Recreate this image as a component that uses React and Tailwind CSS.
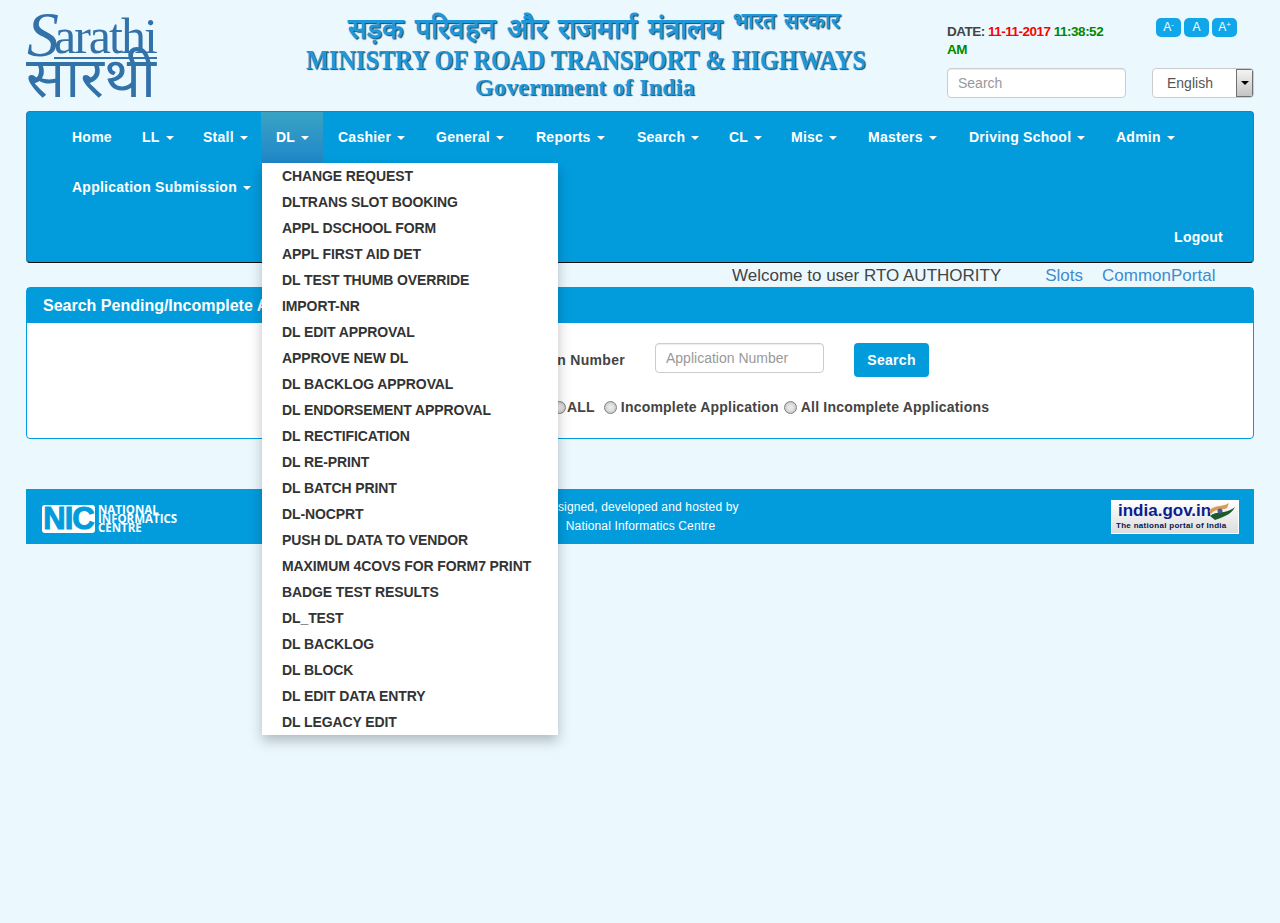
import { useState } from 'react';

const navItems = [
  { label: 'LL', width: 'w-[61px]' },
  { label: 'Stall', width: 'w-[73px]' },
  { label: 'DL', width: 'w-[62px]' },
  { label: 'Cashier', width: 'w-[98px]' },
  { label: 'General', width: 'w-[100px]' },
  { label: 'Reports', width: 'w-[101px]' },
  { label: 'Search', width: 'w-[92px]' },
  { label: 'CL', width: 'w-[62px]' },
  { label: 'Misc', width: 'w-[77px]' },
  { label: 'Masters', width: 'w-[101px]' },
  { label: 'Driving School', width: 'w-[147px]' },
  { label: 'Admin', width: 'w-[72px]' },
  { label: 'Application Submission', width: 'w-[208px]' },
];

const dlMenu = [
  'CHANGE REQUEST', 'DLTRANS SLOT BOOKING', 'APPL DSCHOOL FORM', 'APPL FIRST AID DET', 'DL TEST THUMB OVERRIDE',
  'IMPORT-NR', 'DL EDIT APPROVAL', 'APPROVE NEW DL', 'DL BACKLOG APPROVAL', 'DL ENDORSEMENT APPROVAL',
  'DL RECTIFICATION', 'DL RE-PRINT', 'DL BATCH PRINT', 'DL-NOCPRT', 'PUSH DL DATA TO VENDOR',
  'MAXIMUM 4COVS FOR FORM7 PRINT', 'BADGE TEST RESULTS', 'DL_TEST', 'DL BACKLOG', 'DL BLOCK', 'DL EDIT DATA ENTRY', 'DL LEGACY EDIT',
];

function Caret() {
  return <span className="inline-block w-0 h-0 ml-[2px] align-middle border-t-4 border-x-4 border-x-transparent border-t-white"></span>;
}

function SarathiLogo() {
  return (
    <svg className="mt-[10px] overflow-visible" width="131" height="90" viewBox="0 0 131 90" fill="#3272a8">
      <text x="1" y="46" fontFamily="Liberation Serif" fontStyle="italic" fontSize="64">S</text>
      <text x="28" y="43" fontFamily="Liberation Serif" fontSize="50" letterSpacing="-2">arathi</text>
      <rect x="28" y="47" width="103" height="2" />
      <text x="0" y="87" fontFamily="Noto Sans" fontSize="56" textLength="130" lengthAdjust="spacingAndGlyphs">सारथी</text>
    </svg>
  );
}

function MinistryBanner() {
  return (
    <div className="w-[620px] ml-[-5px] text-center text-[#1f97d8] font-['Liberation_Serif',serif] font-bold [text-shadow:1px_1px_1px_#174a6e]">
      <div className="flex justify-center h-[41px] pt-[11px] pl-[18px] whitespace-nowrap">
        <span className="text-[28px] leading-[36px] [word-spacing:4px]">सड़क परिवहन और राजमार्ग मंत्रालय</span>
        <span className="ml-[11px] mt-[-1px] text-[22px] leading-[22px] [word-spacing:2px]">भारत सरकार</span>
      </div>
      <div className="mt-[6px] text-[27px] leading-[27px] whitespace-nowrap scale-x-[0.9]">MINISTRY OF ROAD TRANSPORT &amp; HIGHWAYS</div>
      <div className="text-[24px] leading-[26px] tracking-[0.2px] whitespace-nowrap">Government of India</div>
    </div>
  );
}

function RadioLabel({ label, gap = 'mr-[4px]', className = '' }) {
  return (
    <label className={`flex items-center ${className}`}>
      <input
        type="radio"
        name="searchType"
        className={`appearance-none w-[13px] h-[13px] rounded-full border border-[#808080] bg-[radial-gradient(circle,#ececec_0%,#e0e0e0_40%,#b4b4b4_100%)] ${gap}`}
      />
      {label}
    </label>
  );
}

export default function App() {
  const [lang] = useState('English');

  return (
    <div className="min-h-[923px] bg-[#ebf9ff] px-[26px] font-['Liberation_Sans',Arial,sans-serif] text-[14px] text-[#444]">
      {/* header */}
      <div className="flex h-[111px]">
        <div className="w-[254px]"><SarathiLogo /></div>
        <MinistryBanner />
        <div className="w-[307px] ml-[52px] pt-[18px]">
          <div className="flex">
            <div className="w-[170px] mt-[5px] font-bold text-[13.5px] leading-[18px] tracking-[-0.5px]">
              DATE: <span className="text-[#f00]">11-11-2017</span> <span className="text-[#080]">11:38:52 AM</span>
            </div>
            <div className="flex gap-[3px] ml-[39px]">
              {['-', '', '+'].map((s, i) => (
                <button key={i} className="w-[25px] h-[19px] rounded-[5px] bg-[#10a6ea] text-white text-[12px] leading-[19px]">
                  A<sup className="text-[8px] leading-none">{s}</sup>
                </button>
              ))}
            </div>
          </div>
          <div className="flex mt-[9px]">
            <input placeholder="Search" className="w-[179px] h-[30px] px-[10px] bg-white border border-[#ccc] rounded-[4px] placeholder:text-[#999] shadow-[inset_0_1px_1px_rgba(0,0,0,0.075)]" />
            <div className="w-[102px] h-[30px] ml-[26px] flex bg-white border border-[#ccc] rounded-[4px] overflow-hidden">
              <span className="flex-1 pl-[14px] leading-[28px] text-[#555]">{lang}</span>
              <span className="w-[17px] flex items-center justify-center bg-gradient-to-b from-[#f4f4f4] to-[#c4c4c4] border border-[#707070]">
                <span className="w-0 h-0 border-t-4 border-x-4 border-x-transparent border-t-black"></span>
              </span>
            </div>
          </div>
        </div>
      </div>

      {/* navbar */}
      <div className="h-[152px] bg-[#029cdd] rounded-[4px] border border-[#2480b0] border-b-[#111] pl-[30px]">
        <ul className="flex flex-wrap font-bold text-white tracking-[0.25px]">
          <li className="w-[70px] h-[50px] px-[15px] leading-[50px]">Home</li>
          {navItems.map(({ label, width }) => (
            <li key={label} className={`relative ${width} h-[50px] pl-[15px] leading-[50px] whitespace-nowrap ${label === 'DL' ? 'h-[51px] -mb-px bg-gradient-to-b from-[#3aa3c4] to-[#1f86c8]' : ''}`}>
              {label} <Caret />
              {label === 'DL' && (
                <ul className="absolute z-10 top-[51px] left-px w-[296px] bg-white text-[#333] shadow-[0_6px_12px_rgba(0,0,0,0.25)] tracking-[-0.1px]">
                  {dlMenu.map(m => (
                    <li key={m} className="h-[26px] px-[20px] leading-[26px] whitespace-nowrap">{m}</li>
                  ))}
                </ul>
              )}
            </li>
          ))}
          <li className="w-full h-[50px] pr-[30px] text-right leading-[50px]">Logout</li>
        </ul>
      </div>

      {/* welcome line */}
      <div className="flex h-[24px] pt-px pl-[706px] text-[17px] leading-[24px]">
        <span>Welcome to user RTO AUTHORITY</span>
        <a className="ml-[44px] text-[#428bca]">Slots</a>
        <a className="ml-[19px] text-[#428bca]">CommonPortal</a>
      </div>

      {/* panel */}
      <div className="h-[152px] bg-white rounded-[4px] border border-[#029cdd]">
        <div className="h-[35px] px-[16px] bg-[#029cdd] text-white font-bold text-[16px] leading-[35px]">Search Pending/Incomplete Applications</div>
        <div className="flex items-start mt-[20px] font-bold tracking-[0.3px]">
          <span className="w-[598px] text-right leading-[34px]">Application Number</span>
          <input placeholder="Application Number" className="w-[169px] h-[30px] ml-[30px] px-[10px] font-normal tracking-normal border border-[#ccc] rounded-[4px] placeholder:text-[#999] shadow-[inset_0_1px_1px_rgba(0,0,0,0.075)]" />
          <button className="w-[75px] h-[34px] ml-[30px] bg-[#029cdd] rounded-[4px] text-white font-bold">Search</button>
        </div>
        <div className="flex mt-[20px] ml-[526px] font-bold tracking-[0.2px] leading-[20px]">
          <RadioLabel label="ALL" gap="mr-px" />
          <RadioLabel label="Incomplete Application" className="ml-[9px]" />
          <RadioLabel label="All Incomplete Applications" className="ml-[5px]" />
        </div>
      </div>

      {/* footer */}
      <div className="flex items-center h-[55px] mt-[50px] bg-[#029cdd] text-white">
        <div className="flex-1 flex items-center pl-[16px] pt-[4px]">
          <div className="w-[53px] h-[28px] bg-white rounded-[3px] text-[#029cdd] font-bold text-[31px] leading-[28px] text-center tracking-[-1px] [-webkit-text-stroke:1px_#029cdd]">NIC</div>
          <div className="ml-[3px] font-['Open_Sans',sans-serif] font-bold text-[11.5px] leading-[9px] uppercase">National<br />Informatics<br />Centre</div>
        </div>
        <div className="text-[12px] leading-[19px] text-center tracking-[0.15px]">Designed, developed and hosted by<br />National Informatics Centre</div>
        <div className="flex-1 flex justify-end pr-[15px]">
          <div className="relative w-[128px] h-[34px] bg-gradient-to-b from-white to-[#ddd] border border-white">
            <div className="text-[#0a1f8f] font-bold text-[17px] leading-[20px] pl-[6px]">india.gov.in</div>
            <div className="text-[#0b1450] font-bold text-[8px] leading-[10px] pl-[4px] tracking-[0.3px]">The national portal of India</div>
            <svg className="absolute right-[1px] top-[1px]" width="30" height="20" viewBox="0 0 30 20">
              <path d="M2 9 C8 2 14 6 22 1 L20 6 C14 9 8 6 4 12 Z" fill="#d99a55" />
              <path d="M3 14 C10 8 18 13 28 5 C24 13 16 15 8 18 Z" fill="#1c5c2a" />
              <circle cx="13" cy="9" r="2.5" fill="#4a5a9a" />
            </svg>
          </div>
        </div>
      </div>
    </div>
  );
}
